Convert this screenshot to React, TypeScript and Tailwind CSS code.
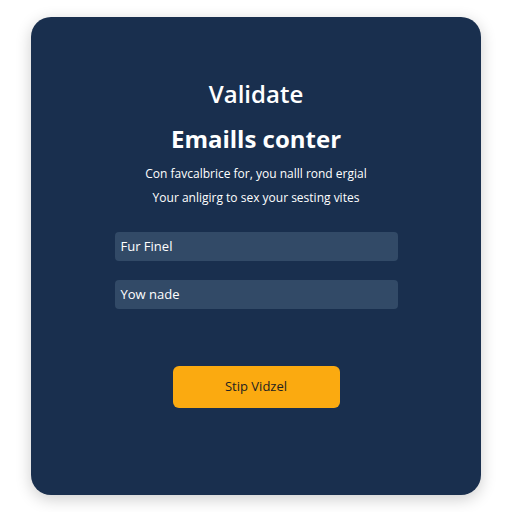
export default function App() {
  return (
    <div className="w-[512px] h-[512px] bg-white px-[31px] pt-[17px] pb-[17px] font-['Open_Sans',sans-serif]">
      <div className="h-[478px] rounded-[20px] bg-[#192f4e] shadow-[0_4px_16px_rgba(0,0,0,0.2)] flex flex-col items-center pt-[61px]">
        <h1 className="text-white text-[24px] font-semibold leading-[32px]">Validate</h1>
        <h2 className="text-white text-[24px] font-bold leading-[32px] mt-[13px]">Emaills conter</h2>
        <p className="text-white text-[12px] leading-[18px] mt-[10px]">Con favcalbrice for, you nalll rond ergial</p>
        <p className="text-white text-[12px] leading-[18px] mt-[6px]">Your anligirg to sex your sesting vites</p>
        <div className="flex flex-col gap-[19px] mt-[25px] w-[283px]">
          <div className="h-[29px] rounded-[4px] bg-[#324a67] px-[6px] flex items-center text-white text-[13px] font-medium">Fur Finel</div>
          <div className="h-[29px] rounded-[4px] bg-[#324a67] px-[6px] flex items-center text-white text-[13px] font-medium">Yow nade</div>
        </div>
        <button className="mt-[57px] w-[167px] h-[42px] rounded-[6px] bg-[#fbaa10] text-[#222] text-[13px] font-medium">Stip Vidzel</button>
      </div>
    </div>
  );
}
